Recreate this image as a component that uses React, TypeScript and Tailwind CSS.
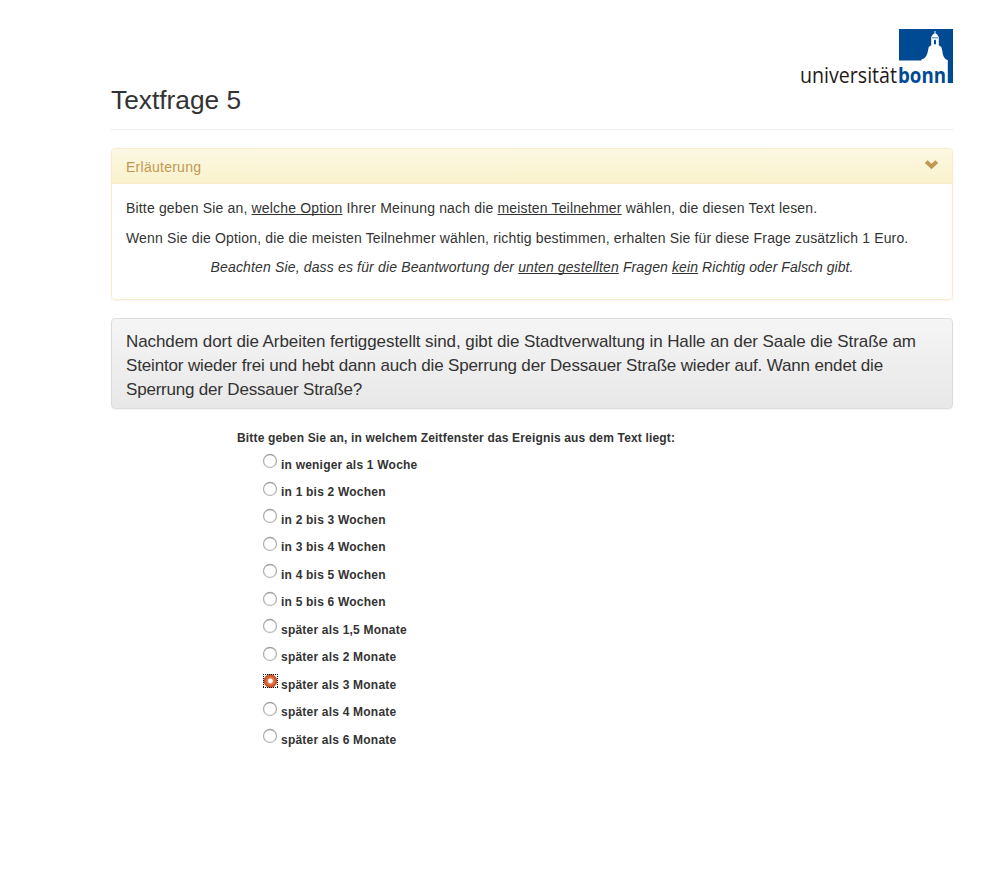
const options = [
  'in weniger als 1 Woche',
  'in 1 bis 2 Wochen',
  'in 2 bis 3 Wochen',
  'in 3 bis 4 Wochen',
  'in 4 bis 5 Wochen',
  'in 5 bis 6 Wochen',
  'später als 1,5 Monate',
  'später als 2 Monate',
  'später als 3 Monate',
  'später als 4 Monate',
  'später als 6 Monate',
];

function Logo() {
  return (
    <svg width="156" height="66" viewBox="0 0 156 66" className="block overflow-visible" aria-label="universität bonn">
      <path fill="#004a93" d="M101 1H155V55H149.8V32.2C146.8 31 145.4 29 144.8 26L144.2 22.5L143.3 19L140.8 17.3V9.5C140.3 7.3 138.9 6 137.5 5.4V3H136.5V5.4C135.1 6 133.7 7.3 133.2 9.5V17.3L130.8 19L130 22.5C129.2 27 127.4 30.8 123.4 31.4V32.4H101Z" />
      <path fill="#004a93" d="M134 9.6H140V10.3H134ZM136 12.8C136 11.5 138 11.5 138 12.8V16.2H136Z" />
      <text x="2" y="54.5" fontSize="21" fill="#1f1a17" textLength="97" lengthAdjust="spacingAndGlyphs" className="font-['Open_Sans',sans-serif] font-normal">universität</text>
      <text x="100" y="54.5" fontSize="21" fill="#004a93" textLength="48" lengthAdjust="spacingAndGlyphs" className="font-['Open_Sans',sans-serif] font-bold">bonn</text>
    </svg>
  );
}

function Option({ label, checked }: { label: string; checked: boolean }) {
  return (
    <label className="flex h-[27.5px] items-start">
      <svg width="16" height="16" viewBox="0 0 16 16" className="mr-[3px] block shrink-0">
        <defs>
          <radialGradient id="mark">
            <stop offset="0.4" stopColor="#e8804f" />
            <stop offset="1" stopColor="#c4471b" />
          </radialGradient>
          <linearGradient id="ring" x1="0" y1="0" x2="0" y2="1">
            <stop offset="0" stopColor="#a2a2a2" />
            <stop offset="1" stopColor="#bdbdbd" />
          </linearGradient>
        </defs>
        {checked ? (
          <g transform="translate(0 0.5)">
            <circle cx="8.4" cy="7.5" r="6.5" fill="url(#mark)" stroke="#b8481f" strokeWidth="0.8" />
            <circle cx="8.4" cy="7.5" r="2.4" fill="#fff" />
            <path d="M1 1H16M1 14H16M1.5 0.5V14.5M15.5 0.5V14.5" fill="none" stroke="#111" strokeDasharray="1 1" shapeRendering="crispEdges" />
          </g>
        ) : (
          <circle cx="8" cy="8" r="6.5" fill="#fff" stroke="url(#ring)" strokeWidth="1.3" />
        )}
      </svg>
      <span className="mt-[2.7px] text-[12px] leading-[18px] font-bold tracking-[0.21px]">{label}</span>
    </label>
  );
}

export default function App() {
  return (
    <div className="h-[891px] overflow-hidden bg-white pl-[111px] pr-[53px] font-['Liberation_Sans',Arial,sans-serif] text-[14px] leading-5 text-[#333]">
      <header className="flex h-[130px] items-start justify-between border-b border-[#eee]">
        <h1 className="mt-[84px] text-[26.3px] leading-8">Textfrage 5</h1>
        <div className="mt-[28px] -mr-[1px]">
          <Logo />
        </div>
      </header>

      <section className="mt-[18px] h-[152px] rounded-[4px] border border-[#faebcc] shadow-[0_1px_2px_rgba(0,0,0,0.05)]">
        <div className="flex h-[35px] justify-between rounded-t-[3px] border-b border-[#faebcc] bg-linear-to-b from-[#fcf8e3] to-[#faf2cc] pt-[8px] pr-[13px] pl-[14px] text-[#c09853]">
          <span className="tracking-[0.26px]">Erläuterung</span>
          <svg width="15" height="11" viewBox="0 0 15 11" className="mt-[2px]">
            <path d="M0.8 4L3.6 1.2L7.5 4.8L11.4 1.2L14.2 4L7.5 10.3Z" fill="#c09853" />
          </svg>
        </div>
        <div className="px-[14px] pt-[14px] whitespace-nowrap [text-decoration-skip-ink:none]">
          <p className="tracking-[0.168px]">
            Bitte geben Sie an, <u>welche Option</u> Ihrer Meinung nach die <u>meisten Teilnehmer</u> wählen, die diesen Text lesen.
          </p>
          <p className="mt-[10px] tracking-[0.16px]">
            Wenn Sie die Option, die die meisten Teilnehmer wählen, richtig bestimmen, erhalten Sie für diese Frage zusätzlich 1 Euro.
          </p>
          <p className="mt-[9px] text-center tracking-[0.115px] italic">
            <span className="tracking-[0.155px]">Beachten Sie, dass es für die Beantwortung der </span>
            <u>unten gestellten</u> Fragen <u>kein</u>
            <span className="tracking-[0.05px]"> Richtig oder Falsch gibt.</span>
          </p>
        </div>
      </section>

      <section className="mt-[18px] h-[91px] rounded-[4px] border border-[#ddd] bg-linear-to-b from-[#f5f5f5] to-[#e8e8e8] px-[14px] pt-[11px] text-[17px] leading-6 whitespace-nowrap shadow-[0_1px_2px_rgba(0,0,0,0.05)]">
        <p className="tracking-[-0.08px]">Nachdem dort die Arbeiten fertiggestellt sind, gibt die Stadtverwaltung in Halle an der Saale die Straße am</p>
        <p className="tracking-[-0.155px]">Steintor wieder frei und hebt dann auch die Sperrung der Dessauer Straße wieder auf. Wann endet die</p>
        <p className="tracking-[-0.2px]">Sperrung der Dessauer Straße?</p>
      </section>

      <main className="mt-[19px] pl-[126px]">
        <p className="h-[25px] pt-px text-[12px] leading-[18px] font-bold tracking-[0.163px]">Bitte geben Sie an, in welchem Zeitfenster das Ereignis aus dem Text liegt:</p>
        <div className="pl-[25px]">
          {options.map((label, i) => (
            <Option key={label} label={label} checked={i === 8} />
          ))}
        </div>
      </main>
    </div>
  );
}
